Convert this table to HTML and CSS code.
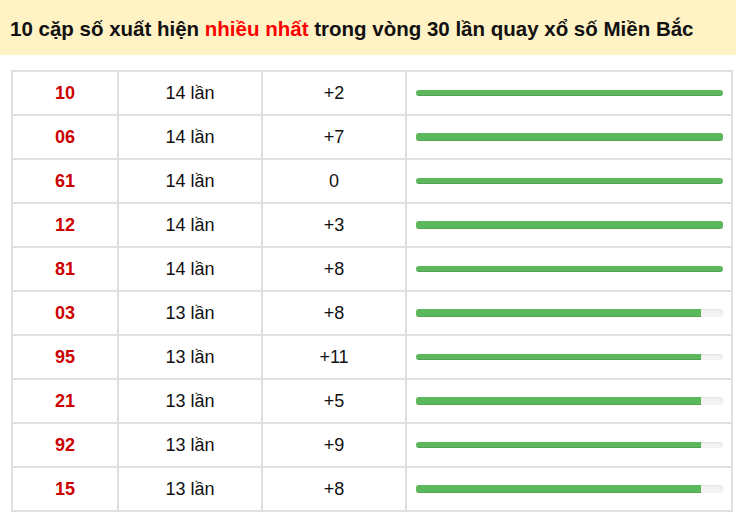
FILE: index.html
```html
<!DOCTYPE html>
<html lang="vi">
<head>
<meta charset="utf-8">
<link rel="stylesheet" href="styles.css">
</head>
<body>
<div class="header">10 cặp số xuất hiện&nbsp;<span class="hot">nhiều nhất</span>&nbsp;trong vòng 30 lần quay xổ số Miền Bắc</div>
<div class="wrap">
<table class="stats">
<tbody>
<tr><td class="num">10</td><td>14 lần</td><td>+2</td><td class="barcell"><div class="track"><div class="bar" style="width:100%"></div></div></td></tr>
<tr><td class="num">06</td><td>14 lần</td><td>+7</td><td class="barcell"><div class="track"><div class="bar" style="width:100%"></div></div></td></tr>
<tr><td class="num">61</td><td>14 lần</td><td>0</td><td class="barcell"><div class="track"><div class="bar" style="width:100%"></div></div></td></tr>
<tr><td class="num">12</td><td>14 lần</td><td>+3</td><td class="barcell"><div class="track"><div class="bar" style="width:100%"></div></div></td></tr>
<tr><td class="num">81</td><td>14 lần</td><td>+8</td><td class="barcell"><div class="track"><div class="bar" style="width:100%"></div></div></td></tr>
<tr><td class="num">03</td><td>13 lần</td><td>+8</td><td class="barcell"><div class="track"><div class="bar" style="width:92.9%"></div></div></td></tr>
<tr><td class="num">95</td><td>13 lần</td><td>+11</td><td class="barcell"><div class="track"><div class="bar" style="width:92.9%"></div></div></td></tr>
<tr><td class="num">21</td><td>13 lần</td><td>+5</td><td class="barcell"><div class="track"><div class="bar" style="width:92.9%"></div></div></td></tr>
<tr><td class="num">92</td><td>13 lần</td><td>+9</td><td class="barcell"><div class="track"><div class="bar" style="width:92.9%"></div></div></td></tr>
<tr><td class="num">15</td><td>13 lần</td><td>+8</td><td class="barcell"><div class="track"><div class="bar" style="width:92.9%"></div></div></td></tr>
</tbody>
</table>
</div>
</body>
</html>
```
FILE: styles.css
```css
html, body {
  margin: 0;
  padding: 0;
  background: #ffffff;
  font-family: "Liberation Sans", Arial, sans-serif;
  color: #111;
}
.header {
  height: 55px;
  background: #fff2c4;
  display: flex;
  align-items: center;
  padding-left: 10px;
  padding-top: 2px;
  box-sizing: border-box;
  font-size: 20.5px;
  font-weight: bold;
  white-space: nowrap;
}
.hot {
  color: #ff0000;
}
.wrap {
  padding: 15px 0 0 11px;
}
.stats {
  width: 722px;
  border-collapse: separate;
  border-spacing: 0;
  border-top: 2px solid #e0e0e0;
  border-left: 2px solid #e0e0e0;
  table-layout: fixed;
}
.stats td {
  box-sizing: border-box;
  height: 44px;
  border-right: 2px solid #e0e0e0;
  border-bottom: 2px solid #e0e0e0;
  text-align: center;
  vertical-align: middle;
  font-size: 18px;
  padding: 0;
}
.stats td:nth-child(1) { width: 106px; }
.stats td:nth-child(2) { width: 144px; }
.stats td:nth-child(3) { width: 144px; }
.stats td:nth-child(4) { width: 326px; }
.stats td.num {
  color: #cc0000;
  font-weight: bold;
}
.stats td.barcell {
  padding: 0 8px 0 9px;
}
.track {
  height: 6px;
  background: #f3f3f3;
  border-radius: 3px;
  box-shadow: inset 0 1px 2px rgba(0,0,0,0.08);
  overflow: hidden;
}
.stats tr:nth-child(even) .track {
  height: 8px;
}
.bar {
  height: 100%;
  background: #5cb85c;
  box-shadow: inset 0 -1px 0 rgba(0,0,0,0.12);
}
```
